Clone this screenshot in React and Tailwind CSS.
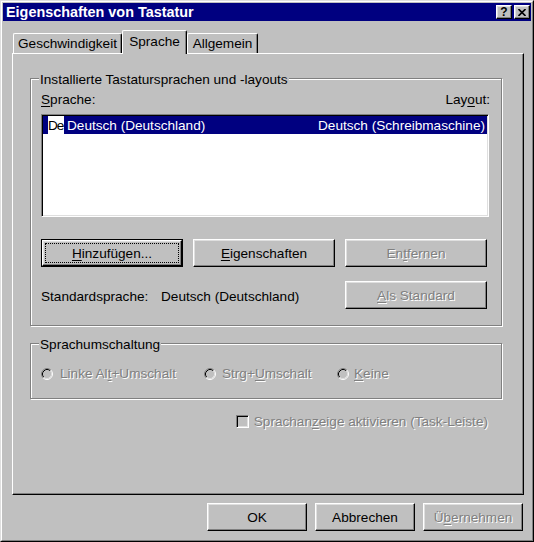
import React from 'react';

const raised =
    'border border-t-white border-l-white border-r-black border-b-black shadow-[inset_-1px_-1px_0_#808080,inset_1px_1px_0_#dfdfdf]';
const dimmed = 'text-[#808080] [text-shadow:1px_1px_0_#ffffff]';

const U = ({ children }) => <span className="underline underline-offset-2 decoration-1">{children}</span>;

const Button = ({ children, className = '', disabled, isDefault }) => {
    if (isDefault) {
        return (
            <div className={`border border-black flex ${className}`}>
                <div className={`flex-1 flex p-[2px] ${raised}`}>
                    <div className="flex-1 flex items-center justify-center border border-dotted border-black">
                        {children}
                    </div>
                </div>
            </div>
        );
    }
    return (
        <div className={`flex items-center justify-center ${raised} ${disabled ? dimmed : ''} ${className}`}>
            {children}
        </div>
    );
};

const CaptionButton = ({ children, className = '' }) => (
    <div className={`w-[16px] h-[14px] bg-[#c0c0c0] flex items-center justify-center ${raised} ${className}`}>
        {children}
    </div>
);

const Tab = ({ children, className = '' }) => (
    <div
        className={`h-[20px] pt-[2px] text-center border-t border-l border-r border-t-white border-l-white border-r-black rounded-tl-[2px] rounded-tr-[2px] shadow-[inset_-1px_0_0_#808080] ${className}`}
    >
        {children}
    </div>
);

const Radio = () => (
    <svg width="12" height="12" viewBox="0 0 12 12" className="shrink-0">
        <circle cx="6" cy="6" r="4" fill="#c0c0c0" />
        <path d="M9.89 2.11 A5.5 5.5 0 0 0 2.11 9.89" fill="none" stroke="#808080" />
        <path d="M9.89 2.11 A5.5 5.5 0 0 1 2.11 9.89" fill="none" stroke="#ffffff" />
        <path d="M9.18 2.82 A4.5 4.5 0 0 0 2.82 9.18" fill="none" stroke="#000000" />
        <path d="M9.18 2.82 A4.5 4.5 0 0 1 2.82 9.18" fill="none" stroke="#dfdfdf" />
    </svg>
);

const groupBox =
    'relative w-[472px] border border-[#808080] shadow-[1px_1px_0_#ffffff,inset_1px_1px_0_#ffffff]';

export default function App() {
    return (
        <div className="w-[534px] h-[542px] bg-[#c0c0c0] font-['Liberation_Sans',Arial,sans-serif] text-[13.6px] leading-[15px] text-black select-none">
            <div className="h-full border border-t-[#dfdfdf] border-l-[#dfdfdf] border-r-black border-b-black">
                <div className="h-full border border-t-white border-l-white border-r-[#808080] border-b-[#808080] p-px flex flex-col">
                    {/* Title bar */}
                    <div className="h-[18px] bg-[#000080] flex items-center pl-[3px] pr-[1px]">
                        <span className="flex-1 text-white font-bold text-[14.4px] leading-[16px]">
                            Eigenschaften von Tastatur
                        </span>
                        <CaptionButton>
                            <span className="font-bold text-[12px] leading-none">?</span>
                        </CaptionButton>
                        <CaptionButton className="ml-[2px]">
                            <svg width="8" height="7" viewBox="0 0 8 7">
                                <path d="M0.5 0 L7.5 7 M7.5 0 L0.5 7" stroke="#000" strokeWidth="1.6" />
                            </svg>
                        </CaptionButton>
                    </div>

                    <div className="flex-1 flex flex-col pl-[9px] pr-[7px] pt-[9px] pb-[8px]">
                        {/* Tabs */}
                        <div className="flex items-end h-[23px] pl-px">
                            <Tab className="w-[109px]">Geschwindigkeit</Tab>
                            <div className="relative z-10 w-[65px] h-[24px] -mb-px pt-[3px] bg-[#c0c0c0] text-center border-t border-l border-r border-t-white border-l-white border-r-black rounded-tl-[2px] rounded-tr-[2px] shadow-[inset_-1px_0_0_#808080]">
                                Sprache
                            </div>
                            <Tab className="w-[71px]">Allgemein</Tab>
                        </div>

                        {/* Tab panel */}
                        <div className="h-[442px] border border-t-white border-l-white border-r-black border-b-black shadow-[inset_-1px_-1px_0_#808080] pt-[24px] pl-[17px]">
                            {/* Installed languages */}
                            <div className={`${groupBox} h-[248px] pt-[13px] pl-[10px] pr-[11px]`}>
                                <span className="absolute -top-[7px] left-[8px] px-px bg-[#c0c0c0]">
                                    Installierte Tastatursprachen und -layouts
                                </span>
                                <div className="flex justify-between">
                                    <span><U>S</U>prache:</span>
                                    <span>Lay<U>o</U>ut:</span>
                                </div>
                                <div className="mt-[7px] w-[448px] h-[103px] bg-white p-px border border-t-[#808080] border-l-[#808080] border-r-white border-b-white shadow-[inset_1px_1px_0_#000000,inset_-1px_-1px_0_#dfdfdf]">
                                    <div className="h-[18px] bg-[#000080] text-white flex items-center pr-[2px]">
                                        <span className="ml-[5px] w-[16px] h-full bg-white text-black flex items-center tracking-[-1px] overflow-hidden">
                                            De
                                        </span>
                                        <span className="ml-[3px] flex-1">Deutsch (Deutschland)</span>
                                        <span>Deutsch (Schreibmaschine)</span>
                                    </div>
                                </div>
                                <div className="mt-[22px] flex gap-[10px]">
                                    <Button isDefault className="w-[142px] h-[28px]">
                                        <span><U>H</U>inzufügen...</span>
                                    </Button>
                                    <Button className="w-[142px] h-[28px]">
                                        <span><U>E</U>igenschaften</span>
                                    </Button>
                                    <Button disabled className="w-[142px] h-[28px]">
                                        <span>En<U>t</U>fernen</span>
                                    </Button>
                                </div>
                                <div className="mt-[14px] flex w-[448px]">
                                    <span className="w-[120px] pt-[8px]">Standardsprache:</span>
                                    <span className="flex-1 pt-[8px]">Deutsch (Deutschland)</span>
                                    <Button disabled className="w-[142px] h-[28px] mr-[2px]">
                                        <span><U>A</U>ls Standard</span>
                                    </Button>
                                </div>
                            </div>

                            {/* Switching */}
                            <div className={`${groupBox} mt-[17px] h-[56px] pt-[22px] pl-[10px]`}>
                                <span className="absolute -top-[7px] left-[8px] px-px bg-[#c0c0c0]">
                                    Sprachumschaltung
                                </span>
                                <div className={`flex ${dimmed}`}>
                                    <div className="w-[163px] flex items-center gap-[7px]">
                                        <Radio />
                                        <span>Linke Al<U>t</U>+Umschalt</span>
                                    </div>
                                    <div className="w-[133px] flex items-center gap-[6px]">
                                        <Radio />
                                        <span>Strg+<U>U</U>mschalt</span>
                                    </div>
                                    <div className="flex items-center gap-[5px]">
                                        <Radio />
                                        <span><U>K</U>eine</span>
                                    </div>
                                </div>
                            </div>

                            <div className="mt-[15px] w-[472px] flex justify-end items-start pr-[14px]">
                                <div className="mt-[1px] w-[13px] h-[13px] bg-[#c0c0c0] border border-t-[#808080] border-l-[#808080] border-r-white border-b-white shadow-[inset_1px_1px_0_#000000,inset_-1px_-1px_0_#dfdfdf]" />
                                <span className={`ml-[5px] ${dimmed}`}>
                                    Sprachan<U>z</U>eige aktivieren (Task-Leiste)
                                </span>
                            </div>
                        </div>

                        {/* Dialog buttons */}
                        <div className="mt-[8px] flex justify-end gap-[8px] pr-px">
                            <Button className="w-[100px] h-[28px]">OK</Button>
                            <Button className="w-[100px] h-[28px]">Abbrechen</Button>
                            <Button disabled className="w-[100px] h-[28px]">
                                <span>Ü<U>b</U>ernehmen</span>
                            </Button>
                        </div>
                    </div>
                </div>
            </div>
        </div>
    );
}
